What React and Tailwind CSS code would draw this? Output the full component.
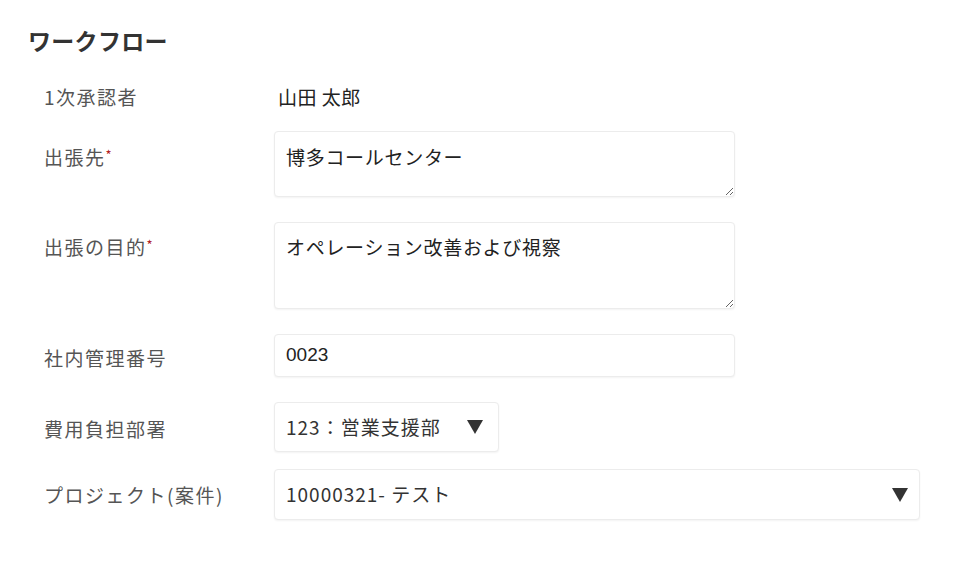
import React from "react";

const jp = { fontFamily: '"Noto Sans CJK JP", "Noto Sans", sans-serif' };
const mixed = { fontFamily: '"Liberation Sans", "Noto Sans CJK JP", sans-serif' };

const Caret = () => (
  <svg width="16" height="14" viewBox="0 0 16 14" className="shrink-0">
    <path d="M0 0 H16 L8 14 Z" fill="#333" />
  </svg>
);

const Label = ({ children, required, className = "" }) => (
  <div
    className={`w-[230px] ml-[16px] shrink-0 text-[19px] leading-[24px] tracking-[1.5px] text-[#555] ${className}`}
    style={jp}
  >
    {children}
    {required && <span className="text-[#b22222] text-[13px] align-top relative top-[-2px]">*</span>}
  </div>
);

const boxCls =
  "bg-white border border-[#ececec] rounded-[4px] shadow-[0_1px_2px_rgba(0,0,0,0.05)]";

export default function App() {
  return (
    <div className="w-[960px] h-[564px] bg-white pl-[28px] pt-[26px]" style={jp}>
      <h2 className="text-[23px] leading-[28px] font-bold text-[#333] tracking-[0.3px]">ワークフロー</h2>

      {/* 1次承認者 */}
      <div className="flex mt-[29px] items-center h-[28px]">
        <Label>1次承認者</Label>
        <div className="pl-[4px] text-[19px] tracking-[0.5px] text-[#222]">山田 太郎</div>
      </div>

      {/* 出張先 */}
      <div className="flex mt-[20px]">
        <Label required className="pt-[14px]">出張先</Label>
        <textarea
          defaultValue="博多コールセンター"
          className={`w-[461px] h-[66px] px-[11px] pt-[13px] text-[19px] leading-[24px] tracking-[0.7px] text-[#222] resize-y outline-none ${boxCls}`}
          style={jp}
        />
      </div>

      {/* 出張の目的 */}
      <div className="flex mt-[25px]">
        <Label required className="pt-[13px]">出張の目的</Label>
        <textarea
          defaultValue="オペレーション改善および視察"
          className={`w-[461px] h-[87px] px-[11px] pt-[12px] text-[19px] leading-[24px] tracking-[0.7px] text-[#222] resize-y outline-none ${boxCls}`}
          style={jp}
        />
      </div>

      {/* 社内管理番号 */}
      <div className="flex mt-[25px] items-center">
        <Label className="pt-[4px]">社内管理番号</Label>
        <div
          className={`w-[461px] h-[43px] px-[11px] flex items-center text-[19px] text-[#222] ${boxCls}`}
          style={mixed}
        >
          0023
        </div>
      </div>

      {/* 費用負担部署 */}
      <div className="flex mt-[25px] items-center">
        <Label className="pt-[3px]">費用負担部署</Label>
        <div
          className={`w-[225px] h-[50px] pl-[11px] pr-[15px] flex items-center justify-between text-[19px] tracking-[1px] text-[#333] ${boxCls}`}
          style={jp}
        >
          <span>123：営業支援部</span>
          <Caret />
        </div>
      </div>

      {/* プロジェクト(案件) */}
      <div className="flex mt-[17px] items-center">
        <Label>プロジェクト(案件)</Label>
        <div
          className={`w-[646px] h-[51px] pl-[11px] pr-[11px] flex items-center justify-between text-[19px] tracking-[1px] text-[#333] ${boxCls}`}
          style={jp}
        >
          <span>10000321- テスト</span>
          <Caret />
        </div>
      </div>
    </div>
  );
}
